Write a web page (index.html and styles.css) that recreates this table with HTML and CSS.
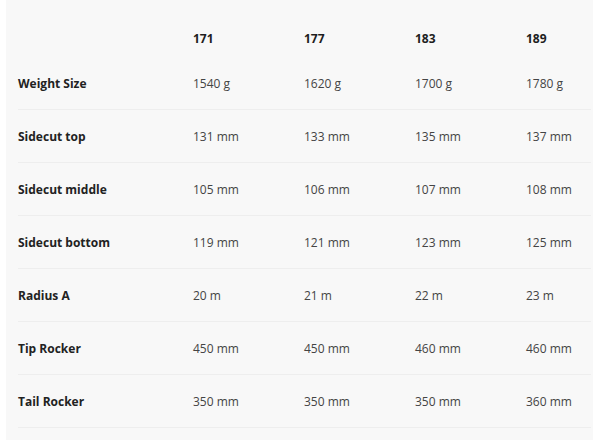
FILE: index.html
```html
<!DOCTYPE html>
<html>
<head>
<meta charset="utf-8">
<link rel="stylesheet" href="styles.css">
</head>
<body>
<div class="panel">
<table class="spec">
<colgroup>
<col class="c-label"><col class="c-val"><col class="c-val"><col class="c-val"><col class="c-last">
</colgroup>
<thead>
<tr><th></th><th>171</th><th>177</th><th>183</th><th>189</th></tr>
</thead>
<tbody>
<tr><td class="label">Weight Size</td><td>1540 g</td><td>1620 g</td><td>1700 g</td><td>1780 g</td></tr>
<tr><td class="label">Sidecut top</td><td>131 mm</td><td>133 mm</td><td>135 mm</td><td>137 mm</td></tr>
<tr><td class="label">Sidecut middle</td><td>105 mm</td><td>106 mm</td><td>107 mm</td><td>108 mm</td></tr>
<tr><td class="label">Sidecut bottom</td><td>119 mm</td><td>121 mm</td><td>123 mm</td><td>125 mm</td></tr>
<tr><td class="label">Radius A</td><td>20 m</td><td>21 m</td><td>22 m</td><td>23 m</td></tr>
<tr><td class="label">Tip Rocker</td><td>450 mm</td><td>450 mm</td><td>460 mm</td><td>460 mm</td></tr>
<tr><td class="label">Tail Rocker</td><td>350 mm</td><td>350 mm</td><td>350 mm</td><td>360 mm</td></tr>
</tbody>
</table>
</div>
</body>
</html>
```
FILE: styles.css
```css
html, body {
  margin: 0;
  padding: 0;
  background: #ffffff;
}
.panel {
  margin: 0 7px 0 6px;
  height: 440px;
  background: #f8f8f8;
  padding: 0 2px 0 12px;
  overflow: hidden;
}
.spec {
  width: 573px;
  border-collapse: collapse;
  table-layout: fixed;
  font-family: "Open Sans", sans-serif;
  font-size: 12px;
  line-height: 17px;
  color: #444444;
}
.c-label { width: 175px; }
.c-val { width: 111px; }
.c-last { width: 65px; }
.spec th, .spec td {
  text-align: left;
  vertical-align: middle;
  white-space: nowrap;
}
.spec th {
  padding: 30px 0 11px 0;
  font-weight: 700;
  color: #1e1e1e;
}
.spec td {
  padding: 18px 0 17px 0;
  border-bottom: 1px solid #eeeeee;
}
.spec tbody tr:first-child td {
  padding-top: 17px;
}
.spec .label {
  font-weight: 700;
  color: #222222;
}
```
